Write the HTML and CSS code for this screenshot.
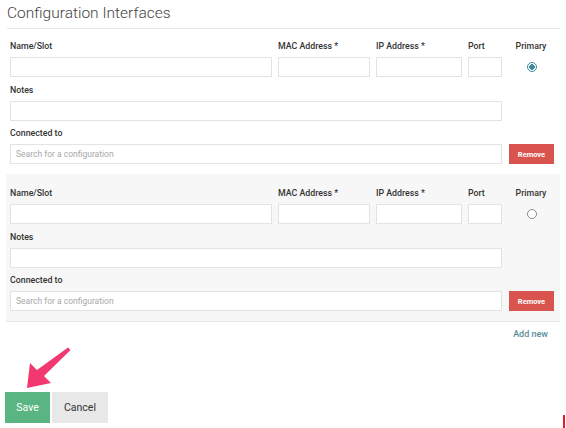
FILE: index.html
```html
<!DOCTYPE html>
<html>
<head>
<meta charset="utf-8">
<link rel="stylesheet" href="styles.css">
</head>
<body>
<div class="page">
  <h1 class="title">Configuration Interfaces</h1>

  <div class="iface">
    <div class="grid">
      <label class="lbl">Name/Slot</label>
      <label class="lbl">MAC Address *</label>
      <label class="lbl">IP Address *</label>
      <label class="lbl">Port</label>
      <label class="lbl center">Primary</label>
      <input class="inp" type="text">
      <input class="inp" type="text">
      <input class="inp" type="text">
      <input class="inp" type="text">
      <div class="radio-cell"><span class="radio on"></span></div>
      <label class="lbl span4 gap6">Notes</label>
      <input class="inp span4" type="text">
      <label class="lbl span4 gap5">Connected to</label>
      <input class="inp span4" type="text" placeholder="Search for a configuration">
      <button class="remove">Remove</button>
    </div>
  </div>

  <div class="iface alt">
    <div class="grid">
      <label class="lbl">Name/Slot</label>
      <label class="lbl">MAC Address *</label>
      <label class="lbl">IP Address *</label>
      <label class="lbl">Port</label>
      <label class="lbl center">Primary</label>
      <input class="inp" type="text">
      <input class="inp" type="text">
      <input class="inp" type="text">
      <input class="inp" type="text">
      <div class="radio-cell"><span class="radio"></span></div>
      <label class="lbl span4 gap6">Notes</label>
      <input class="inp span4" type="text">
      <label class="lbl span4 gap5">Connected to</label>
      <input class="inp span4" type="text" placeholder="Search for a configuration">
      <button class="remove">Remove</button>
    </div>
  </div>

  <div class="addrow"><a class="addnew">Add new</a></div>

  <div class="actions">
    <button class="btn save">Save</button>
    <button class="btn cancel">Cancel</button>
  </div>
</div>

<svg class="arrow" width="70" height="70" viewBox="0 0 70 70">
  <path d="M63 1.5 L65.5 4 L39 30 L46 37 L22 42 L25 17 L32 24 Z" fill="#f2386e"/>
</svg>
<div class="redmark"></div>
</body>
</html>
```

FILE: styles.css
```css
* { box-sizing: border-box; }
html, body { margin: 0; padding: 0; background: #fff; }
body {
  width: 566px;
  height: 428px;
  overflow: hidden;
  position: relative;
  font-family: Roboto, "Liberation Sans", Arial, sans-serif;
  color: #333;
}
.page { padding: 0 6px 0 6px; }
.title {
  margin: 0 0 0 1px;
  height: 29px;
  padding-top: 3px;
  font-size: 15.5px;
  line-height: 20px;
  font-weight: 300;
  color: #444;
  border-bottom: 1px solid #e8e8e8;
}
.iface {
  padding: 10px 6px 10px 4px;
}
.iface.alt {
  background: #f7f7f7;
  padding-top: 12px;
  border-bottom: 1px solid #e6e6e6;
}
.grid {
  display: grid;
  grid-template-columns: 262px 92px 86px 34px 46px;
  column-gap: 6px;
  align-items: center;
}
.lbl {
  font-size: 8.8px;
  font-weight: 500;
  line-height: 14px;
  height: 14px;
  margin-bottom: 4px;
  color: #333;
}
.lbl.center { text-align: center; }
.span4 { grid-column: 1 / span 4; }
.gap6 { margin-top: 6px; }
.gap5 { margin-top: 5px; }
.inp {
  height: 20px;
  width: 100%;
  border: 1px solid #e3e3e3;
  background: #fff;
  margin: 0;
  padding: 0 5px;
  font-family: Roboto, "Liberation Sans", Arial, sans-serif;
  font-size: 8.5px;
  outline: none;
}
.inp::placeholder { color: #a9a9a9; }
.radio-cell {
  display: flex;
  justify-content: center;
  align-items: center;
  height: 20px;
}
.radio {
  width: 10px;
  height: 10px;
  border-radius: 50%;
  border: 1px solid #8a8a8a;
  background: #fff;
  display: block;
  margin-left: 1px;
}
.radio.on {
  border: 1.5px solid #3f8a9a;
  background: radial-gradient(circle, #3f8a9a 0, #3f8a9a 2.6px, #fff 3px);
}
.remove {
  height: 20px;
  width: 45px;
  margin: 0 0 0 1px;
  border: 0;
  background: #d9534f;
  color: #fff;
  font-family: Roboto, "Liberation Sans", Arial, sans-serif;
  font-size: 7.5px;
  font-weight: 700;
  padding: 0;
}
.addrow {
  display: flex;
  justify-content: flex-end;
  padding-right: 12px;
  height: 22px;
  align-items: center;
  margin-top: 1px;
}
.addnew {
  font-size: 9px;
  font-weight: 500;
  color: #5a8e9b;
}
.actions {
  display: flex;
  gap: 2px;
  margin-top: 47px;
  margin-left: -1px;
}
.btn {
  height: 31px;
  border: 0;
  font-family: Roboto, "Liberation Sans", Arial, sans-serif;
  font-size: 10.5px;
  padding: 0;
}
.save { width: 45px; background: #59b581; color: #fff; }
.cancel { width: 56px; background: #e8e8e8; color: #333; }
.arrow {
  position: absolute;
  left: 5px;
  top: 346px;
}
.redmark {
  position: absolute;
  left: 563px;
  top: 415px;
  width: 2px;
  height: 13px;
  background: #e8182a;
}
```
